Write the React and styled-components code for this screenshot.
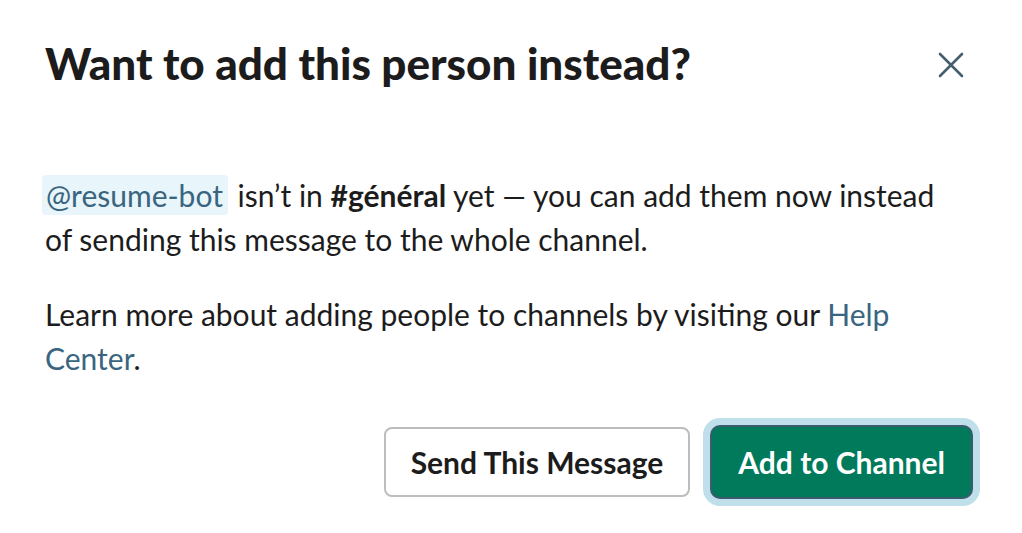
import React from 'react'
import styled, { createGlobalStyle } from 'styled-components'

const GlobalStyle = createGlobalStyle`
  html, body {
    margin: 0;
    padding: 0;
    background: #ffffff;
  }
  body {
    font-family: Lato, "Noto Sans", sans-serif;
    color: #1d1c1d;
    -webkit-font-smoothing: antialiased;
  }
`

export default function App() {
  return (
    <Modal>
      <GlobalStyle />
      <Header>
        <Title>Want to add this person instead?</Title>
        <CloseButton aria-label="Close">
          <svg width="26" height="26" viewBox="0 0 26 26" fill="none">
            <path d="M2 2 L24 24 M24 2 L2 24" stroke="#44606f" strokeWidth="2.6" strokeLinecap="round" />
          </svg>
        </CloseButton>
      </Header>
      <Body>
        <Paragraph>
          <Mention>@resume-bot</Mention> isn’t in <Strong>#général</Strong> yet — you can add them now instead of sending this message to the whole channel.
        </Paragraph>
        <Paragraph>
          Learn more about adding people to channels by visiting our <HelpLink href="#">Help Center</HelpLink>.
        </Paragraph>
      </Body>
      <Footer>
        <Button>Send This Message</Button>
        <Button primary>Add to Channel</Button>
      </Footer>
    </Modal>
  )
}

const Modal = styled.div`
  width: 1022px;
  height: 533px;
  box-sizing: border-box;
  padding: 33px 51px 0 45px;
  display: flex;
  flex-direction: column;
`

const Header = styled.div`
  display: flex;
  justify-content: space-between;
  align-items: center;
  height: 60px;
`

const Title = styled.h1`
  margin: 0;
  font-size: 44px;
  font-weight: 900;
  line-height: 60px;
  color: #1d1c1d;
`

const CloseButton = styled.button`
  border: none;
  background: none;
  padding: 0;
  margin: 4px 2px 0 0;
  width: 36px;
  height: 36px;
  display: flex;
  align-items: center;
  justify-content: center;
  cursor: pointer;
`

const Body = styled.div`
  margin-top: 80px;
  padding-right: 10px;
`

const Paragraph = styled.p`
  margin: 0 0 31px;
  font-size: 30px;
  line-height: 44px;
  color: #1d1c1d;
`

const Mention = styled.span`
  display: inline-block;
  background: #e8f5fa;
  color: #3a6580;
  padding: 0 5px 0 4px;
  margin: 0 2px 0 -3px;
  border-radius: 4px;
  line-height: 40px;
`

const Strong = styled.b`
  font-weight: 700;
`

const HelpLink = styled.a`
  color: #3a6580;
  text-decoration: none;
`

const Footer = styled.div`
  display: flex;
  justify-content: flex-end;
  gap: 22px;
  margin-top: 16px;
`

const Button = styled.button`
  height: 70px;
  box-sizing: border-box;
  padding: 0 ${p => (p.primary ? '24px' : '25px')};
  border-radius: 8px;
  font-family: Lato, "Noto Sans", sans-serif;
  font-size: 30px;
  font-weight: 700;
  cursor: pointer;
  border: 2px solid ${p => (p.primary ? '#007a5a' : '#bbbdbe')};
  background: ${p => (p.primary ? '#007a5a' : '#ffffff')};
  color: ${p => (p.primary ? '#ffffff' : '#1d1c1d')};
  box-shadow: ${p => (p.primary ? '0 0 0 2px #3d5b6e, 0 0 0 9px #bfdfea' : 'none')};
`
